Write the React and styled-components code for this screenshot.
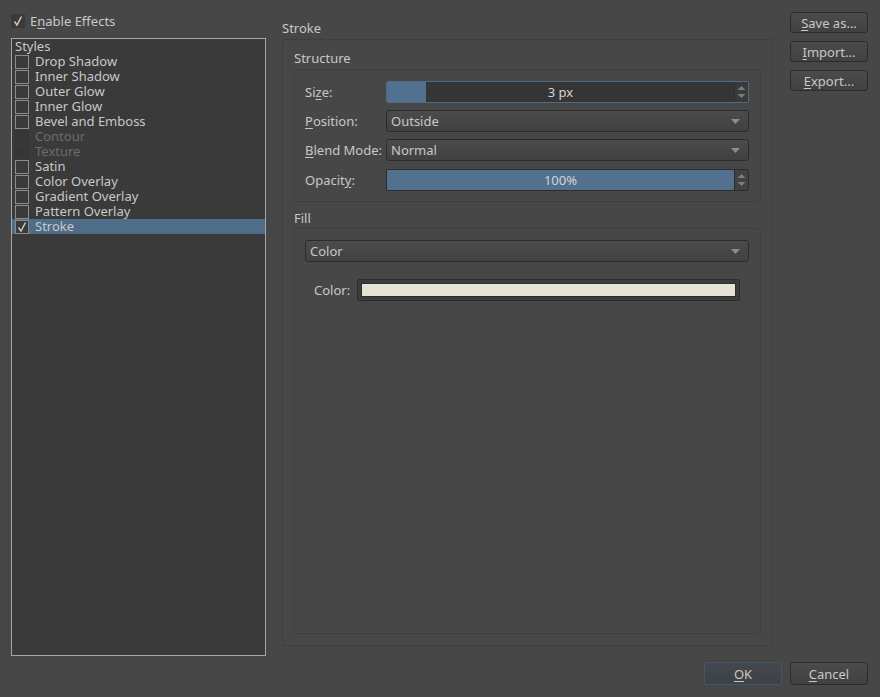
import React from 'react';
import styled, { createGlobalStyle } from 'styled-components';

const GlobalStyle = createGlobalStyle`
  html, body {
    margin: 0;
    padding: 0;
    background: #474747;
  }
  body {
    font-family: "Noto Sans", "DejaVu Sans", sans-serif;
    font-size: 13px;
    color: #c8c8c8;
  }
`;

const styles = [
  { name: 'Drop Shadow' },
  { name: 'Inner Shadow' },
  { name: 'Outer Glow' },
  { name: 'Inner Glow' },
  { name: 'Bevel and Emboss' },
  { name: 'Contour', disabled: true },
  { name: 'Texture', disabled: true },
  { name: 'Satin' },
  { name: 'Color Overlay' },
  { name: 'Gradient Overlay' },
  { name: 'Pattern Overlay' },
  { name: 'Stroke', checked: true, selected: true },
];

const Check = () => (
  <svg width="12" height="12" viewBox="0 0 12 12">
    <polyline points="2.5,6.5 5,10 9.5,1.5" fill="none" stroke="#c8c8c8" strokeWidth="1.5" />
  </svg>
);

const Caret = () => (
  <svg width="9" height="5" viewBox="0 0 9 5">
    <polygon points="0,0 9,0 4.5,5" fill="#8e8e8e" />
  </svg>
);

const SpinArrows = () => (
  <svg width="9" height="16" viewBox="0 0 9 16">
    <polygon points="0.5,6 8.5,6 4.5,2" fill="#7c7c7c" />
    <polygon points="0.5,10 8.5,10 4.5,14" fill="#7c7c7c" />
  </svg>
);

const App = () => {
  return (
    <>
      <GlobalStyle />
      <Dialog>
        <Main>
          <LeftColumn>
            <EnableRow>
              <EnableBox><Check /></EnableBox>
              <span>E<u>n</u>able Effects</span>
            </EnableRow>
            <StyleList>
              <ListHeader>Styles</ListHeader>
              {styles.map((s) => (
                <StyleRow key={s.name} $selected={s.selected} $disabled={s.disabled}>
                  <RowBox $disabled={s.disabled}>{s.checked && <Check />}</RowBox>
                  <RowText>{s.name}</RowText>
                </StyleRow>
              ))}
            </StyleList>
          </LeftColumn>

          <MiddleColumn>
            <Title>Stroke</Title>
            <Group>
              <SubTitle>Structure</SubTitle>
              <SubGroup>
                <FormGrid>
                  <FieldLabel>Si<u>z</u>e:</FieldLabel>
                  <Spin $focused>
                    <SpinTrack>
                      <SpinFill style={{ width: `${(3 / 27) * 100}%` }} />
                      <SpinText>3 px</SpinText>
                    </SpinTrack>
                    <SpinButtons $focused><SpinArrows /></SpinButtons>
                  </Spin>

                  <FieldLabel><u>P</u>osition:</FieldLabel>
                  <Combo>
                    <span>Outside</span>
                    <Caret />
                  </Combo>

                  <FieldLabel><u>B</u>lend Mode:</FieldLabel>
                  <Combo>
                    <span>Normal</span>
                    <Caret />
                  </Combo>

                  <FieldLabel $shift>Opacit<u>y</u>:</FieldLabel>
                  <Spin $shift>
                    <SpinTrack>
                      <SpinFill style={{ width: '100%' }} />
                      <SpinText>100%</SpinText>
                    </SpinTrack>
                    <SpinButtons><SpinArrows /></SpinButtons>
                  </Spin>
                </FormGrid>
              </SubGroup>

              <SubTitle $spaced>Fill</SubTitle>
              <SubGroup $grow>
                <Combo>
                  <span>Color</span>
                  <Caret />
                </Combo>
                <ColorRow>
                  <ColorLabel>Color:</ColorLabel>
                  <Swatch>
                    <SwatchFill />
                  </Swatch>
                </ColorRow>
              </SubGroup>
            </Group>
          </MiddleColumn>

          <RightColumn>
            <Button><u>S</u>ave as...</Button>
            <Button><u>I</u>mport...</Button>
            <Button><u>E</u>xport...</Button>
          </RightColumn>
        </Main>

        <Footer>
          <Button $default><u>O</u>K</Button>
          <Button><u>C</u>ancel</Button>
        </Footer>
      </Dialog>
    </>
  );
};

export default App;

const Dialog = styled.div`
  box-sizing: border-box;
  width: 880px;
  height: 697px;
  padding: 12px 12px 12px 11px;
  display: flex;
  flex-direction: column;
  background: #474747;

  u {
    text-decoration: underline;
    text-underline-offset: 2px;
    text-decoration-thickness: 1px;
  }
`;

const Main = styled.div`
  flex: 1;
  display: flex;
  min-height: 0;
`;

const LeftColumn = styled.div`
  width: 255px;
  display: flex;
  flex-direction: column;
`;

const EnableRow = styled.div`
  height: 18px;
  display: flex;
  align-items: center;
  gap: 5px;
  line-height: 18px;
`;

const EnableBox = styled.div`
  width: 14px;
  height: 14px;
  background: #3a3a3a;
  display: flex;
  align-items: center;
  justify-content: center;
`;

const StyleList = styled.div`
  flex: 1;
  margin-top: 8px;
  border: 1px solid #a6a6a6;
  background: #3a3a3a;
  padding: 0;
`;

const ListHeader = styled.div`
  height: 15px;
  line-height: 15px;
  padding-left: 3px;
`;

const StyleRow = styled.div`
  height: 15px;
  display: flex;
  align-items: center;
  gap: 6px;
  padding-left: 3px;
  background: ${(p) => (p.$selected ? '#4f6c88' : 'transparent')};
  color: ${(p) => (p.$disabled ? '#6c6c6c' : '#c8c8c8')};
`;

const RowText = styled.span`
  line-height: 15px;
  height: 15px;
  overflow: visible;
`;

const RowBox = styled.div`
  box-sizing: border-box;
  width: 14px;
  height: 14px;
  border: 1px solid ${(p) => (p.$disabled ? '#363636' : '#8c8c8c')};
  background: ${(p) => (p.$disabled ? '#363636' : '#3a3a3a')};
  display: flex;
  align-items: center;
  justify-content: center;
`;

const MiddleColumn = styled.div`
  width: 491px;
  margin-left: 16px;
  display: flex;
  flex-direction: column;
  padding-bottom: 10px;
`;

const Title = styled.div`
  padding-top: 7px;
  line-height: 18px;
  margin-bottom: 2px;
`;

const Group = styled.div`
  flex: 1;
  box-sizing: border-box;
  border: 1px solid #3f3f3f;
  border-radius: 2px;
  padding: 9px 11px 11px 11px;
  display: flex;
  flex-direction: column;
`;

const SubTitle = styled.div`
  line-height: 18px;
  margin-bottom: ${(p) => (p.$spaced ? '1px' : '2px')};
  margin-top: ${(p) => (p.$spaced ? '7px' : '0')};
`;

const SubGroup = styled.div`
  box-sizing: border-box;
  border: 1px solid #3f3f3f;
  border-radius: 2px;
  padding: 11px 11px 11px 10px;
  ${(p) => p.$grow && 'flex: 1;'}
`;

const FormGrid = styled.div`
  display: grid;
  grid-template-columns: 81px 1fr;
  grid-auto-rows: 22px;
  row-gap: 7px;
  align-items: center;
`;

const FieldLabel = styled.div`
  line-height: 22px;
  white-space: nowrap;
  ${(p) => p.$shift && 'margin-top: 1px;'}
`;

const Spin = styled.div`
  box-sizing: border-box;
  height: 22px;
  display: flex;
  border: 1px solid ${(p) => (p.$focused ? '#4d6b89' : '#2c2c2c')};
  border-radius: 2px;
  background: #353535;
  overflow: hidden;
  ${(p) => p.$shift && 'margin-top: 2px;'}
`;

const SpinTrack = styled.div`
  position: relative;
  flex: 1;
`;

const SpinFill = styled.div`
  position: absolute;
  left: 0;
  top: 0;
  bottom: 0;
  background: #52718f;
`;

const SpinText = styled.div`
  position: relative;
  text-align: center;
  line-height: 20px;
  color: #d4d4d4;
`;

const SpinButtons = styled.div`
  width: 13px;
  border-left: 1px solid #2c2c2c;
  background: ${(p) => (p.$focused ? '#3a3a3a' : '#424242')};
  display: flex;
  align-items: center;
  justify-content: center;
`;

const Combo = styled.div`
  box-sizing: border-box;
  height: 22px;
  display: flex;
  align-items: center;
  justify-content: space-between;
  padding: 0 8px 0 4px;
  border: 1px solid #2c2c2c;
  border-radius: 3px;
  background: linear-gradient(#4b4b4b, #414141);
  line-height: 20px;
`;

const ColorRow = styled.div`
  margin-top: 16px;
  display: flex;
  align-items: center;
  padding-left: 9px;
  padding-right: 9px;
  gap: 7px;
`;

const ColorLabel = styled.div`
  line-height: 22px;
  margin-top: 1px;
`;

const Swatch = styled.div`
  flex: 1;
  box-sizing: border-box;
  height: 22px;
  padding: 4px;
  border: 1px solid #2c2c2c;
  border-radius: 2px;
  background: #3c3c3c;
  display: flex;
`;

const SwatchFill = styled.div`
  flex: 1;
  background: #e6e2d6;
  border: 1px solid #2e2e2e;
  margin: -1px;
`;

const RightColumn = styled.div`
  margin-left: 17px;
  width: 78px;
  display: flex;
  flex-direction: column;
  gap: 8px;
`;

const Button = styled.div`
  box-sizing: border-box;
  width: 78px;
  height: 21px;
  display: flex;
  align-items: center;
  justify-content: center;
  border: 1px solid ${(p) => (p.$default ? '#3e5870' : '#2c2c2c')};
  border-radius: 3px;
  background: ${(p) =>
    p.$default ? 'linear-gradient(#44474b, #3e4146)' : 'linear-gradient(#4b4b4b, #414141)'};
  color: #c8c8c8;
  line-height: 20px;
`;

const Footer = styled.div`
  display: flex;
  justify-content: flex-end;
  gap: 8px;
  margin-top: 6px;

  ${Button} {
    height: 23px;
  }
`;
